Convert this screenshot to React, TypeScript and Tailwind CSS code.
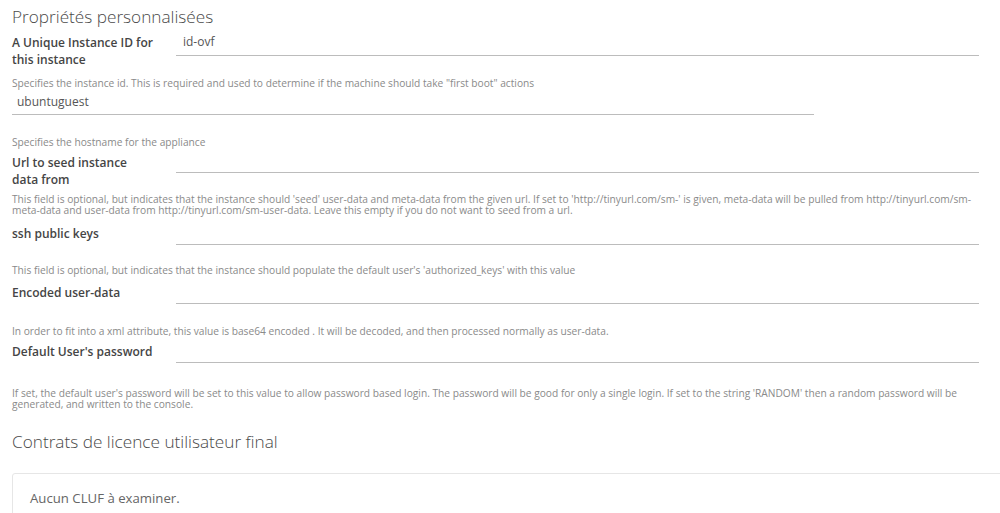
import React from "react";

const font = { fontFamily: "'Open Sans', 'Liberation Sans', sans-serif" };

function Help({ children, mt }: { children: React.ReactNode; mt: string }) {
  return (
    <p className={`${mt} whitespace-nowrap text-[10.2px] leading-[11.5px] text-[#8a8a8a]`}>{children}</p>
  );
}

const label = "w-[164px] text-[12px] font-semibold leading-[17px] text-[#454545]";

export default function App() {
  return (
    <div className="min-h-[513px] w-[1000px] overflow-hidden bg-white pl-3 pr-[21px] text-[#565656]" style={font}>
      <h2 className="mt-[5px] text-[17.2px] font-light leading-[24px] text-[#4a4a4a]">Propriétés personnalisées</h2>

      {/* Row 1 */}
      <div className="mt-[5px] flex items-start">
        <div className={label}>
          A Unique Instance ID for
          <br />
          this instance
        </div>
        <div className="h-[22px] flex-1 border-b border-[#bcbcbc] pl-[7px] text-[12px] leading-[16px] text-[#565656]">id-ovf</div>
      </div>
      <Help mt="mt-[10px]">
        Specifies the instance id. This is required and used to determine if the machine should take "first boot" actions
      </Help>

      <div className="mt-[4.5px] h-[21px] w-[802px] border-b border-[#bcbcbc] pl-[5px] text-[12px] leading-[16px] text-[#565656]">
        ubuntuguest
      </div>
      <Help mt="mt-[22px]">Specifies the hostname for the appliance</Help>

      {/* Url row */}
      <div className="mt-[5.5px] flex items-start">
        <div className={label}>
          Url to seed instance
          <br />
          data from
        </div>
        <div className="h-[19px] flex-1 border-b border-[#bcbcbc]" />
      </div>
      <Help mt="mt-[5.5px]">
        This field is optional, but indicates that the instance should 'seed' user-data and meta-data from the given url. If set to 'http://tinyurl.com/sm-' is given, meta-data will be pulled from http://tinyurl.com/sm-
        <br />
        meta-data and user-data from http://tinyurl.com/sm-user-data. Leave this empty if you do not want to seed from a url.
      </Help>

      {/* ssh row */}
      <div className="mt-[8px] flex items-start">
        <div className={label}>ssh public keys</div>
        <div className="h-[20px] flex-1 border-b border-[#bcbcbc]" />
      </div>
      <Help mt="mt-[20px]">
        This field is optional, but indicates that the instance should populate the default user's 'authorized_keys' with this value
      </Help>

      {/* Encoded row */}
      <div className="mt-[7.5px] flex items-start">
        <div className={label}>Encoded user-data</div>
        <div className="h-[20px] flex-1 border-b border-[#bcbcbc]" />
      </div>
      <Help mt="mt-[22px]">
        In order to fit into a xml attribute, this value is base64 encoded . It will be decoded, and then processed normally as user-data.
      </Help>

      {/* Default password row */}
      <div className="mt-[5.5px] flex items-start">
        <div className={label}>Default User's password</div>
        <div className="h-[20px] flex-1 border-b border-[#bcbcbc]" />
      </div>
      <Help mt="mt-[25px]">
        If set, the default user's password will be set to this value to allow password based login. The password will be good for only a single login. If set to the string 'RANDOM' then a random password will be
        <br />
        generated, and written to the console.
      </Help>

      <h2 className="mt-[19.5px] text-[17.2px] font-light leading-[24px] text-[#4a4a4a]">Contrats de licence utilisateur final</h2>

      <div className="-mr-[30px] mt-[19px] rounded-[3px] border border-[#e6e6e6] pl-[17px] pt-[14px] pb-[14px] text-[13.2px] leading-[20px] text-[#666]">
        Aucun CLUF à examiner.
      </div>
    </div>
  );
}
